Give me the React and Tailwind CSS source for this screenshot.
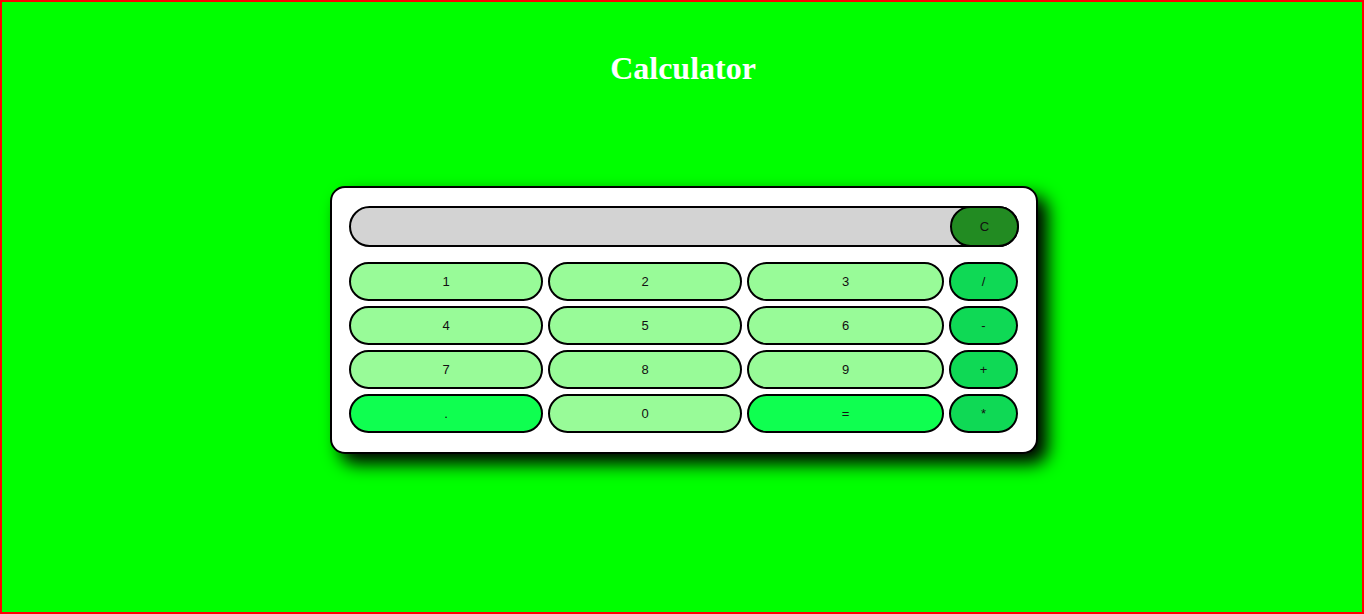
import React from "react";

const num = "bg-[#98fb98]";
const op = "bg-[#0fd955]";
const eq = "bg-[#0fff50]";

const keys = [
  ["1", num], ["2", num], ["3", num], ["/", op],
  ["4", num], ["5", num], ["6", num], ["-", op],
  ["7", num], ["8", num], ["9", num], ["+", op],
  [".", eq], ["0", num], ["=", eq], ["*", op],
];

export default function App() {
  return (
    <div className="h-[614px] w-full border-2 border-[#ff0000] bg-[#00ff00] flex flex-col items-center overflow-hidden">
      <h1 className="mt-[48px] ml-[2px] h-[37px] leading-[37px] text-[32px] font-bold text-white font-['Liberation_Serif',serif]">
        Calculator
      </h1>
      <div className="mt-[99px] ml-[4px] w-[708px] rounded-[15px] border-2 border-black bg-white pt-[18px] pb-[19px] px-[17px] shadow-[10px_10px_18px_#000] font-['Liberation_Sans',Arial,sans-serif] text-[13px] text-[#111]">
        <div className="relative h-[41px]">
          <div className="h-full w-full rounded-full border-2 border-black bg-[#d3d3d3]" />
          <div className="absolute right-0 top-0 flex h-[41px] w-[69px] items-center justify-center rounded-full border-2 border-black bg-[#228b22] pt-[1px]">
            C
          </div>
        </div>
        <div className="mt-[15px] grid grid-cols-[194px_194px_197px_69px] auto-rows-[39px] gap-[5px]">
          {keys.map(([k, c], i) => (
            <div
              key={i}
              className={`flex items-center justify-center rounded-full border-2 border-black pt-[1px] ${c}`}
            >
              {k}
            </div>
          ))}
        </div>
      </div>
    </div>
  );
}
